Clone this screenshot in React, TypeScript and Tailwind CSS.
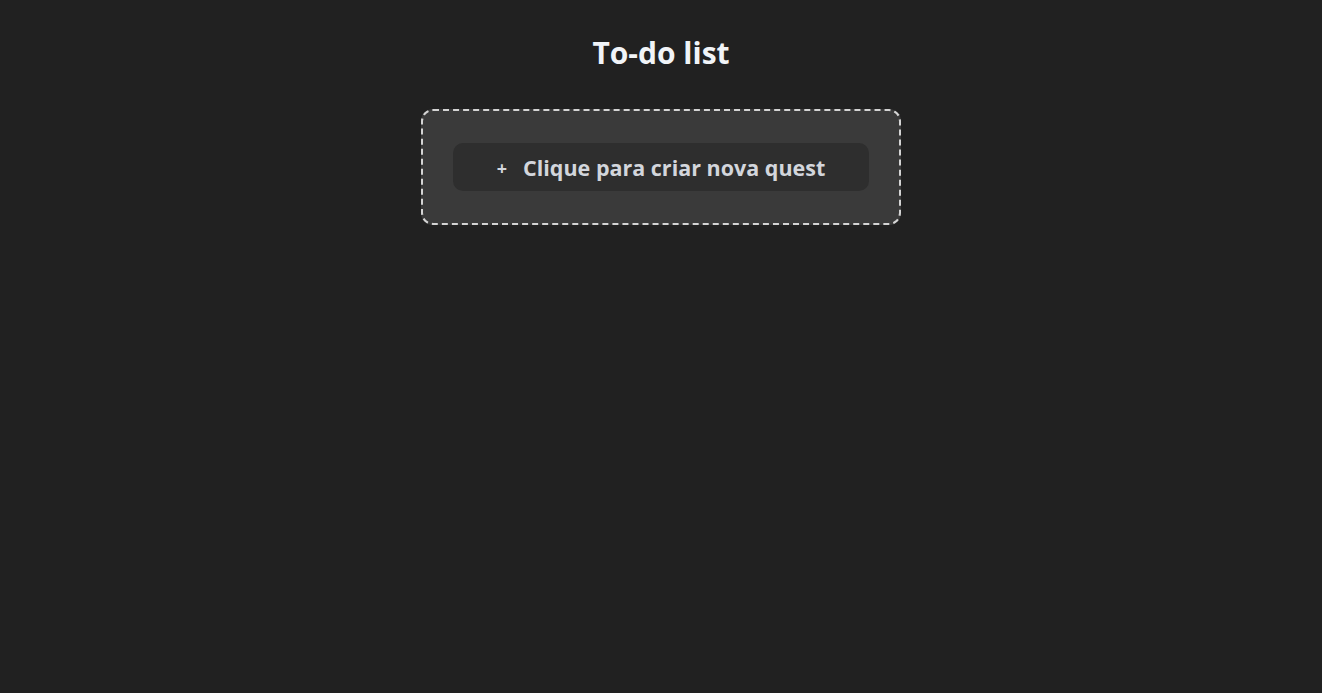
const App = () => {
  return (
    <div
      className="flex min-h-[693px] flex-col items-center bg-[#212121] pt-[33px]"
      style={{ fontFamily: '"Open Sans", "Noto Sans", sans-serif' }}
    >
      <h1 className="text-[30px] font-bold leading-[40px] text-[#f1f4f8]">
        To-do list
      </h1>

      <div className="mt-[36px] w-[480px] rounded-[12px] border-2 border-dashed border-[#d4d4d4] bg-[#3a3a3a] px-[30px] py-[32px]">
        <button className="flex h-[48px] w-full items-center justify-center gap-[16px] rounded-[10px] bg-[#2e2e2e] pt-[3px] text-[21.5px] font-bold text-[#d3d6dc]">
          <span className="text-[18px]">+</span>
          <span>Clique para criar nova quest</span>
        </button>
      </div>
    </div>
  );
};

export default App;
